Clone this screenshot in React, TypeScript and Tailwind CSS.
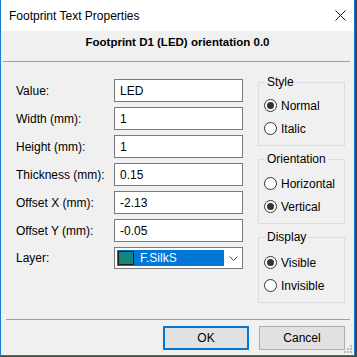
import React from "react";

const font = { fontFamily: '"Liberation Sans", Arial, sans-serif' };

function Radio({ label, checked }: { label: string; checked?: boolean }) {
  return (
    <div className="flex items-center h-[23px] pl-[5px]">
      <div className="w-[13px] h-[13px] rounded-full border border-[#333333] bg-white flex items-center justify-center">
        {checked && <div className="w-[7px] h-[7px] rounded-full bg-[#333333]" />}
      </div>
      <span className="ml-[4px] text-[12px] leading-[14px] text-black">{label}</span>
    </div>
  );
}

function Group({
  title,
  children,
  pt,
}: {
  title: string;
  children: React.ReactNode;
  pt: string;
}) {
  return (
    <fieldset className={`border border-[#dcdcdc] pb-[5px] ${pt}`}>
      <legend className="ml-[6px] px-[2px] text-[12px] leading-[14px] text-black">{title}</legend>
      {children}
    </fieldset>
  );
}

function Field({ label, value }: { label: string; value: string }) {
  return (
    <div className="flex items-center h-[23px]">
      <div className="w-[98px] text-[12px] leading-[14px] text-black">{label}</div>
      <div className="w-[129px] h-[23px] border border-[#7a7a7a] bg-white flex items-center pl-[5px] text-[12px] text-black">
        {value}
      </div>
    </div>
  );
}

export default function App() {
  return (
    <div className="w-[357px] h-[357px] bg-[#3b4a3e] overflow-hidden" style={font}>
      <div className="relative w-[355px] h-[356px] border-l border-r border-b border-[#1a7bd0] bg-[#f0f0f0] flex flex-col">
        {/* Title bar */}
        <div className="h-[31px] bg-white flex items-center justify-between pl-[8px] pr-[8px]">
          <span className="text-[12px] text-black">Footprint Text Properties</span>
          <svg width="11" height="11" viewBox="0 0 11 11">
            <path d="M0.5 0.5 L10.5 10.5 M10.5 0.5 L0.5 10.5" stroke="#111" strokeWidth="1" />
          </svg>
        </div>
        {/* Header */}
        <div className="h-[30px] flex justify-center items-center pb-[6px] font-bold text-[11.5px] text-black">
          Footprint D1 (LED) orientation 0.0
        </div>
        <div className="h-px bg-[#a0a0a0] ml-[2px] w-[347px]" />
        {/* Main */}
        <div className="h-[257px] flex items-start pt-[13px]">
          <div className="pl-[15px] pt-[4px] flex flex-col gap-[5px]">
            <Field label="Value:" value="LED" />
            <Field label="Width (mm):" value="1" />
            <Field label="Height (mm):" value="1" />
            <Field label="Thickness (mm):" value="0.15" />
            <Field label="Offset X (mm):" value="-2.13" />
            <Field label="Offset Y (mm):" value="-0.05" />
            <div className="flex items-center h-[22px]">
              <div className="w-[98px] text-[12px] leading-[14px] text-black">Layer:</div>
              <div className="w-[129px] h-[22px] border border-[#7a7a7a] bg-white flex items-center pl-[2px]">
                <div className="w-[107px] h-[16px] bg-[#0078d7] flex items-center pl-[1px]">
                  <div className="w-[16px] h-[14px] border border-[#1e1e1e] bg-[#13877b]" />
                  <span className="ml-[6px] text-[12px] text-white">F.SilkS</span>
                </div>
                <div className="flex-1 flex justify-center">
                  <svg width="9" height="5" viewBox="0 0 9 5">
                    <path d="M0.5 0.5 L4.5 4.5 L8.5 0.5" stroke="#444" strokeWidth="1" fill="none" />
                  </svg>
                </div>
              </div>
            </div>
          </div>
          <div className="ml-[15px] w-[87px] flex flex-col gap-[6px]">
            <Group title="Style" pt="pt-[5px]">
              <Radio label="Normal" checked />
              <Radio label="Italic" />
            </Group>
            <Group title="Orientation" pt="pt-[6px]">
              <Radio label="Horizontal" />
              <Radio label="Vertical" checked />
            </Group>
            <Group title="Display" pt="pt-[7px]">
              <Radio label="Visible" checked />
              <Radio label="Invisible" />
            </Group>
          </div>
        </div>
        <div className="h-px bg-[#a0a0a0] ml-[5px] w-[344px]" />
        {/* Buttons */}
        <div className="pt-[6px] flex justify-end pr-[9px] gap-[10px]">
          <button className="w-[86px] h-[24px] border-2 border-[#0078d7] bg-[#e1e1e1] text-[12px] text-black">
            OK
          </button>
          <button className="w-[86px] h-[24px] border border-[#adadad] bg-[#e1e1e1] text-[12px] text-black">
            Cancel
          </button>
        </div>
        {/* Resize grip */}
        <svg className="absolute right-[1px] bottom-[1px]" width="9" height="9" viewBox="0 0 9 9">
          <rect x="6" y="0" width="2" height="2" fill="#b8b8b8" />
          <rect x="3" y="3" width="2" height="2" fill="#b8b8b8" />
          <rect x="6" y="3" width="2" height="2" fill="#b8b8b8" />
          <rect x="0" y="6" width="2" height="2" fill="#b8b8b8" />
          <rect x="3" y="6" width="2" height="2" fill="#b8b8b8" />
          <rect x="6" y="6" width="2" height="2" fill="#b8b8b8" />
        </svg>
      </div>
    </div>
  );
}
